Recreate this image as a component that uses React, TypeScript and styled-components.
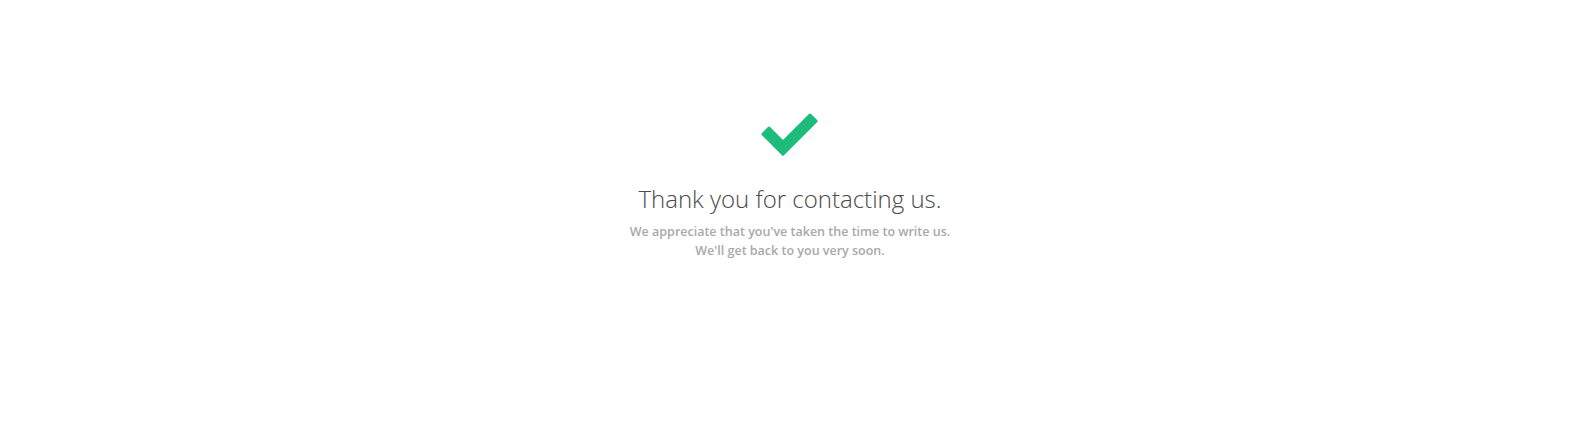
import React from "react";
import styled, { createGlobalStyle } from "styled-components";

const Global = createGlobalStyle`
  html, body { margin: 0; padding: 0; background: #ffffff; }
  body { font-family: "Open Sans", "Liberation Sans", sans-serif; }
`;

const Page = styled.main`
  height: 428px;
  display: flex;
  flex-direction: column;
  align-items: center;
  padding: 110px 0 0 4px;
  box-sizing: border-box;
`;

const Check = styled.svg`
  display: block;
  width: 64px;
  height: 50px;
`;

const Title = styled.h1`
  margin: 23px 0 0;
  font-family: "Open Sans", sans-serif;
  font-weight: 300;
  font-size: 24px;
  line-height: 32px;
  color: #4a4a4a;
`;

const Message = styled.p`
  margin: 7px 0 0;
  font-family: "Open Sans", sans-serif;
  font-weight: 600;
  font-size: 12.5px;
  line-height: 19px;
  color: #a9a9a9;
  text-align: center;
`;

export default function App() {
  return (
    <>
      <Global />
      <Page>
        <Check viewBox="0 0 64 50">
          <polygon
            points="10.99,18.12 25,32.12 52,5.13 58.02,11.14 25,44.14 4.98,24.14"
            fill="#1ebc7c"
            stroke="#1ebc7c"
            strokeWidth={3}
            strokeLinejoin="round"
          />
        </Check>
        <Title>Thank you for contacting us.</Title>
        <Message>
          We appreciate that you've taken the time to write us.
          <br />
          We'll get back to you very soon.
        </Message>
      </Page>
    </>
  );
}
